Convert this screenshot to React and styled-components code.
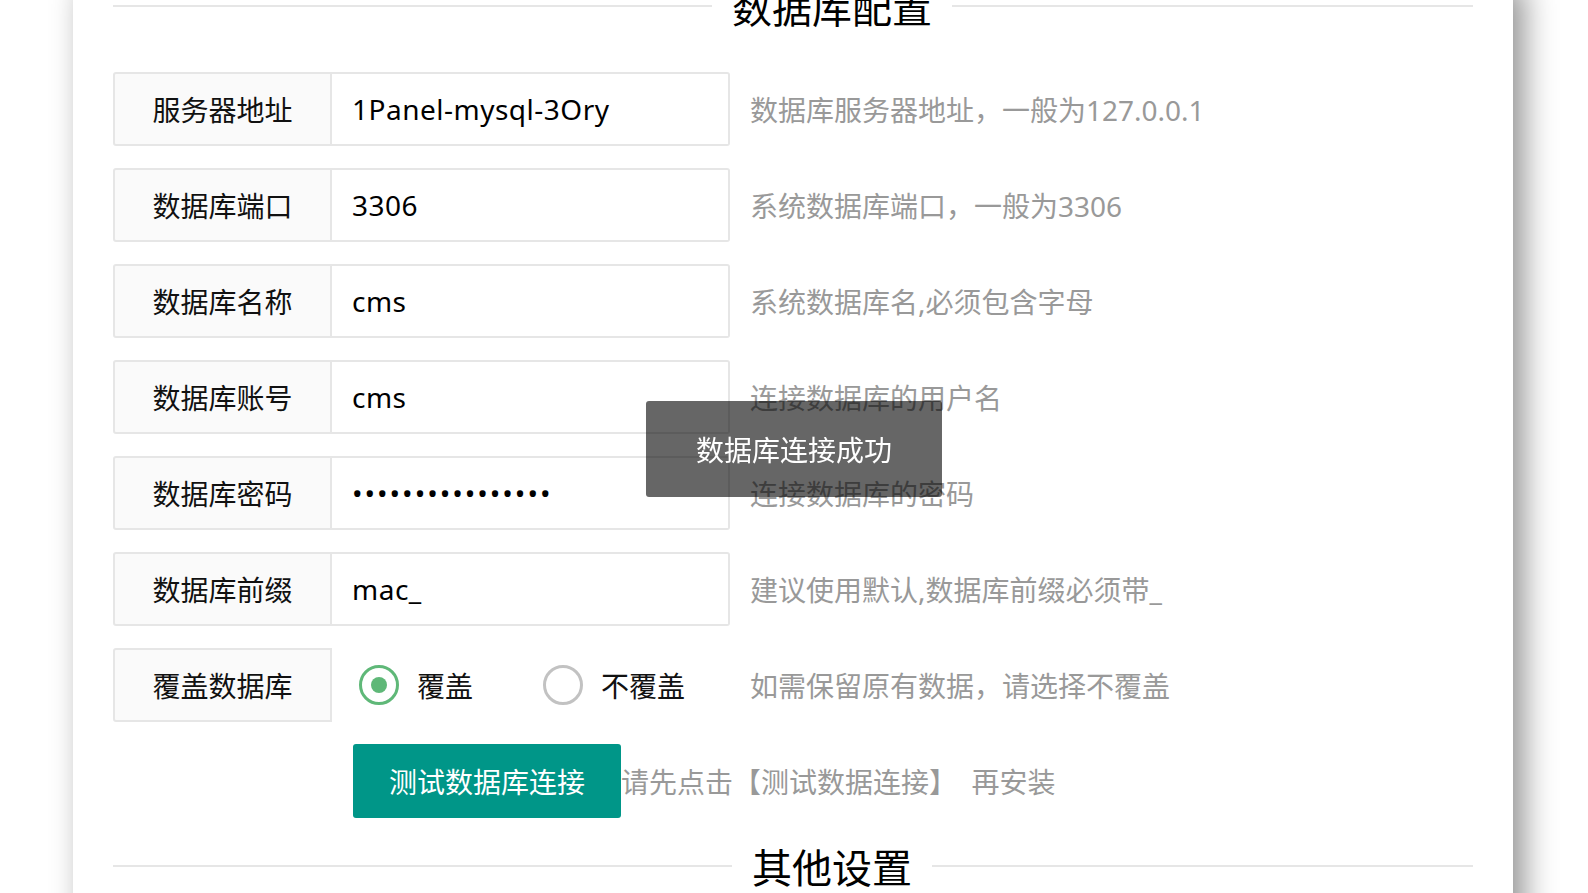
import { createGlobalStyle } from "styled-components"
import styled from "styled-components"

const GlobalStyle = createGlobalStyle`
html, body {
  margin:0;
  padding:0;
  background:#fff;
  overflow:hidden;
  height:100%;
}
body {
  font-family:"Noto Sans","Noto Sans CJK SC",sans-serif;
  color:#111;
}
`

const Card = styled.div`
width:1440px;
height:1000px;
box-sizing:border-box;
margin:-14px 0 0 73px;
padding:0 40px;
background:#fff;
box-shadow:11px 0 30px rgba(0,0,0,0.43);
`

const Title = styled.div`
display:flex;
align-items:center;
height:40px;
margin-top:${p => p.$top || 0}px;

.title__line{
  height:2px;
  background:#e6e6e6;
  flex:1 0 0;
}
.title__line--left{
  flex:1 0 78px;
}
.title__text{
  padding:0 20px;
  font-size:40px;
  line-height:40px;
  color:#000;
  white-space:nowrap;
  font-family:"Noto Sans CJK SC",sans-serif;
}
`

const Form = styled.div`
display:flex;
flex-direction:column;
gap:22px;
margin-top:46px;
`

const Row = styled.div`
display:flex;
align-items:center;
height:74px;
`

const Label = styled.div`
flex-shrink:0;
box-sizing:border-box;
width:219px;
height:74px;
display:flex;
align-items:center;
justify-content:center;
background:#fafafa;
border:2px solid #e6e6e6;
border-radius:3px 0 0 3px;
font-size:28px;
color:#111;
white-space:nowrap;
font-family:"Noto Sans CJK SC",sans-serif;
`

const Input = styled.input`
flex-shrink:0;
box-sizing:border-box;
width:398px;
height:74px;
border:2px solid #e6e6e6;
border-left:0;
border-radius:0 3px 3px 0;
padding:0 20px;
font-size:28px;
font-family:"Noto Sans","Noto Sans CJK SC",sans-serif;
color:#000;
background:#fff;
outline:none;
letter-spacing:${p => p.$spacing ?? 0.5}px;
`

const Hint = styled.div`
margin-left:${p => p.$gap ?? 20}px;
font-size:28px;
color:#999;
white-space:pre;
font-family:"Noto Sans","Noto Sans CJK SC",sans-serif;
`

const Radios = styled.div`
flex-shrink:0;
box-sizing:border-box;
width:398px;
display:flex;
align-items:center;
padding-left:27px;
`

const RadioItem = styled.label`
flex-shrink:0;
display:flex;
align-items:center;
gap:18px;
margin-right:70px;
font-size:28px;
color:#111;
white-space:nowrap;
font-family:"Noto Sans CJK SC",sans-serif;
`

const Dot = styled.span`
flex-shrink:0;
box-sizing:border-box;
width:40px;
height:40px;
border-radius:50%;
border:3px solid ${p => (p.$on ? "#5FB878" : "#c2c2c2")};
display:flex;
align-items:center;
justify-content:center;

&::after{
  content:"";
  width:16px;
  height:16px;
  border-radius:50%;
  background:#5FB878;
  display:${p => (p.$on ? "block" : "none")};
}
`

const ButtonRow = styled.div`
display:flex;
align-items:center;
padding-left:240px;
margin-top:22px;
`

const Button = styled.button`
flex-shrink:0;
height:74px;
padding:0 36px;
border:0;
border-radius:3px;
background:#009688;
color:#fff;
font-size:28px;
white-space:nowrap;
font-family:"Noto Sans CJK SC",sans-serif;
cursor:pointer;
`

const Toast = styled.div`
position:fixed;
left:50%;
top:calc(50% + 2px);
transform:translate(-50%,-50%);
padding:34px 50px;
line-height:28px;
font-size:28px;
color:#fff;
background:rgba(0,0,0,0.6);
border-radius:3px;
white-space:nowrap;
font-family:"Noto Sans CJK SC",sans-serif;
`

const fields = [
  { label: "服务器地址", value: "1Panel-mysql-3Ory", hint: "数据库服务器地址，一般为127.0.0.1" },
  { label: "数据库端口", value: "3306", hint: "系统数据库端口，一般为3306" },
  { label: "数据库名称", value: "cms", hint: "系统数据库名,必须包含字母" },
  { label: "数据库账号", value: "cms", hint: "连接数据库的用户名" },
  { label: "数据库密码", value: "cms_password_123", hint: "连接数据库的密码", type: "password", spacing: 2 },
  { label: "数据库前缀", value: "mac_", hint: "建议使用默认,数据库前缀必须带_" },
]

const SectionTitle = ({ text, top }) => (
  <Title $top={top}>
    <span className="title__line title__line--left" />
    <span className="title__text">{text}</span>
    <span className="title__line" />
  </Title>
)

export default function App() {
  return (
    <>
      <GlobalStyle />
      <Card>
        <SectionTitle text="数据库配置" />
        <Form>
          {fields.map(f => (
            <Row key={f.label}>
              <Label>{f.label}</Label>
              <Input type={f.type || "text"} value={f.value} $spacing={f.spacing} readOnly />
              <Hint>{f.hint}</Hint>
            </Row>
          ))}
          <Row>
            <Label>覆盖数据库</Label>
            <Radios>
              <RadioItem><Dot $on />覆盖</RadioItem>
              <RadioItem><Dot />不覆盖</RadioItem>
            </Radios>
            <Hint>如需保留原有数据，请选择不覆盖</Hint>
          </Row>
        </Form>
        <ButtonRow>
          <Button>测试数据库连接</Button>
          <Hint $gap={0}>请先点击【测试数据连接】  再安装</Hint>
        </ButtonRow>
        <SectionTitle text="其他设置" top={28} />
      </Card>
      <Toast>数据库连接成功</Toast>
    </>
  )
}
